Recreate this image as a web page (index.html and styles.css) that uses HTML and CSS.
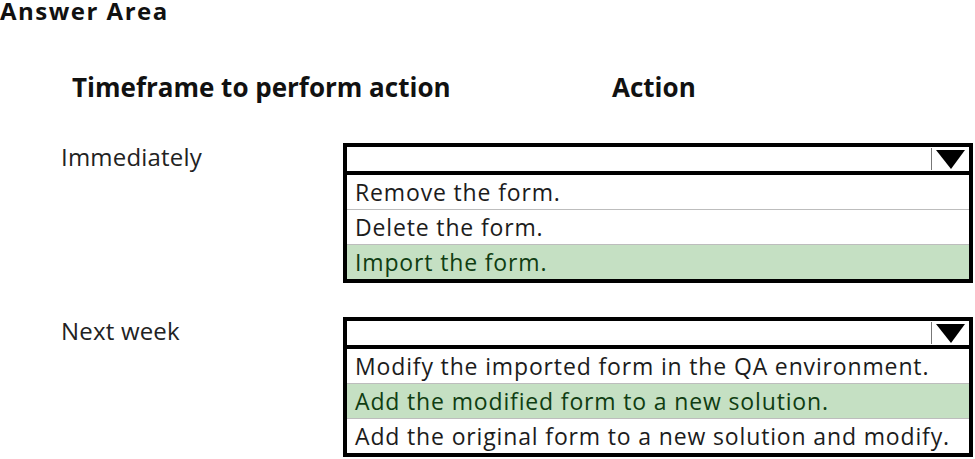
FILE: index.html
```html
<!DOCTYPE html>
<html>
<head>
<meta charset="utf-8">
<link rel="stylesheet" href="styles.css">
</head>
<body>
<div class="page">
  <h1 class="title">Answer Area</h1>
  <div class="heads">
    <div class="head-time">Timeframe to perform action</div>
    <div class="head-action">Action</div>
  </div>
  <div class="group group-1">
    <div class="label">Immediately</div>
    <div class="box">
      <div class="box-head">
        <span class="sep"></span>
        <svg class="arrow" width="29" height="20" viewBox="0 0 29 20"><polygon points="0,1 29,1 15,20" fill="#000"/></svg>
      </div>
      <div class="opt">Remove the form.</div>
      <div class="opt">Delete the form.</div>
      <div class="opt sel">Import the form.</div>
    </div>
  </div>
  <div class="group group-2">
    <div class="label">Next week</div>
    <div class="box">
      <div class="box-head">
        <span class="sep"></span>
        <svg class="arrow" width="29" height="20" viewBox="0 0 29 20"><polygon points="0,1 29,1 15,20" fill="#000"/></svg>
      </div>
      <div class="opt">Modify the imported form in the QA environment.</div>
      <div class="opt sel">Add the modified form to a new solution.</div>
      <div class="opt">Add the original form to a new solution and modify.</div>
    </div>
  </div>
</div>
</body>
</html>
```
FILE: styles.css
```css
html, body {
  margin: 0;
  padding: 0;
  background: #fff;
}
body {
  font-family: "Open Sans", "Noto Sans", sans-serif;
  color: #1a1a1a;
  width: 975px;
  height: 459px;
  overflow: hidden;
}
.page {
  display: flex;
  flex-direction: column;
}
.title {
  margin: 0;
  padding: 0;
  font-size: 24px;
  font-weight: 700;
  line-height: 22px;
  height: 22px;
  letter-spacing: 1.5px;
  color: #111;
}
.heads {
  display: flex;
  margin-top: 48px;
  height: 34px;
  line-height: 34px;
  font-size: 26px;
  font-weight: 700;
  letter-spacing: 0;
  color: #111;
}
.head-time {
  margin-left: 72px;
  width: 540px;
}
.group {
  display: flex;
  align-items: flex-start;
}
.group-1 {
  margin-top: 39px;
}
.group-2 {
  margin-top: 34px;
}
.label {
  width: 343px;
  flex: none;
  padding-left: 61px;
  box-sizing: border-box;
  font-size: 24px;
  line-height: 24px;
  margin-top: 2px;
  color: #222;
  letter-spacing: 0.2px;
}
.box {
  width: 630px;
  flex: none;
  border: 4px solid #000;
  box-sizing: border-box;
  background: #fff;
}
.box-head {
  height: 24px;
  border-bottom: 4px solid #000;
  display: flex;
  justify-content: flex-end;
  align-items: center;
  padding-right: 4px;
}
.sep {
  width: 1px;
  height: 22px;
  background: #777;
  margin-right: 4px;
}
.arrow {
  display: block;
}
.opt {
  height: 34px;
  line-height: 34px;
  padding-left: 8px;
  font-size: 23px;
  letter-spacing: 0.85px;
  color: #1c1c1c;
  white-space: nowrap;
  overflow: hidden;
}
.opt + .opt {
  border-top: 1px solid #bdbdbd;
}
.opt.sel {
  background: #c5e0c3;
  color: #0f3d12;
}
```
